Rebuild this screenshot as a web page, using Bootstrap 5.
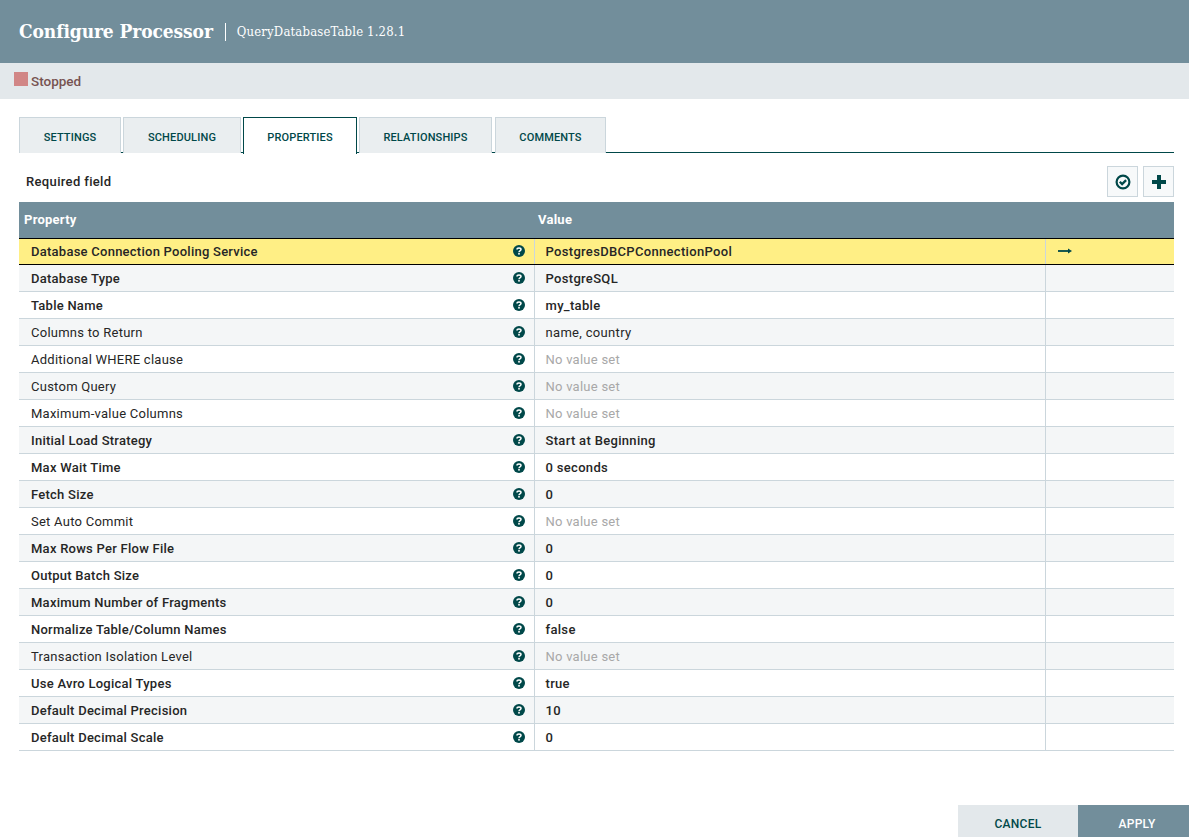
<!DOCTYPE html>
<html lang="en">
<head>
<meta charset="utf-8">
<title>Configure Processor</title>
<link href="https://cdn.jsdelivr.net/npm/bootstrap@5.3.0/dist/css/bootstrap.min.css" rel="stylesheet">
<style>
html,body{height:100%;margin:0;overflow:hidden}
body{font-family:Roboto,sans-serif;font-size:13px;color:#262626;background:#fff}
.shell{height:837px}
.dlg-head{height:63px;background:#728e9b;color:#fff;padding:0 19px;flex:none}
.dlg-title{font-family:"DejaVu Serif Condensed","DejaVu Serif",serif;font-weight:700;font-size:19px;line-height:1;margin:0 12px 0 0;letter-spacing:-.1px}
.dlg-sub{font-family:"DejaVu Serif Condensed","DejaVu Serif",serif;font-size:13px;line-height:18px;border-left:1px solid #fff;padding-left:11px;letter-spacing:.16px}
.stat-bar{height:36px;background:#e3e8eb;padding:0 14px;flex:none}
.stat-sq{width:14px;height:14px;background:#d18686;margin-right:3px;margin-top:-4px}
.stat-txt{color:#775351;font-weight:500;font-size:13.5px}
.tab-bar{margin:18px 15px 0 19px;height:36px;border-bottom:1px solid #004849;padding:0;gap:2px;flex:none}
.tab-item{height:36px;background:#eaeef0;border:1px solid #cbd6dc;border-bottom:0;color:#004849;font-size:11px;font-weight:500;letter-spacing:.15px;text-transform:uppercase;padding-top:5px}
.tab-item.on{background:#fff;border:1px solid #004849;border-bottom:0;height:37px;position:relative;z-index:1;padding-top:4px}
.tw1{width:102px}.tw2{width:118px}.tw3{width:114px}.tw4{width:133px}.tw5{width:111px}
.tw4{margin-right:1px}
.tool-row{height:49px;margin:0 15px 0 19px;padding:8px 0 0 7px;flex:none}
.req-label{font-weight:500;font-size:13px;letter-spacing:.35px}
.sq-btn{width:31px;height:31px;background:#f7f9fa;border:1px solid #cbd6dc;padding:0}
.btn-gap{gap:5px}
.prop-wrap{margin:0 15px 0 19px;flex:none}
.prop-table{width:100%;border-collapse:collapse;table-layout:fixed;margin:0;letter-spacing:.25px}
.col-p{width:515px}.col-v{width:511px}
.prop-table th{height:36px;background:#728e9b;color:#fff;font-weight:700;font-size:13px;padding:0 5px;border:0}
.prop-table th.val-h{padding-left:4px}
.prop-table td{height:27px;padding:2px 12px 0;border-bottom:1px solid #cbd6dc;vertical-align:middle;background:#fff;font-size:13px;color:#262626}
.prop-table tr:nth-child(even) td{background:#f4f6f7}
.prop-table td.c1{padding-right:9px}
.prop-table td.c2,.prop-table td.c3{border-left:1px solid #cbd6dc}
.prop-table td.c2{padding-left:11px}
.prop-table td.c2 .pval{letter-spacing:.32px}
.prop-table tr.sel td{height:26px;background:#ffef85;border-top:1px solid #000;border-bottom:1px solid #000}
.prop-table tr.req .pname,.prop-table tr.req .pval{font-weight:500}
.help-ic{margin-top:-1px}
.sel .help-ic{margin-top:-3px}
.arrow-ic{margin-top:-3px}
.nil{color:#a8a8a8}
.foot{margin-top:auto;flex:none}
.foot-btn{height:32px;width:120px;border:0;border-radius:0;font-size:12px;font-weight:500;letter-spacing:.3px;padding:6px 0 0}
.foot-cancel{background:#e3e8eb;color:#004849}
.foot-apply{background:#728e9b;color:#fff;width:111px;padding-left:7px}
</style>
</head>
<body>
<div class="shell d-flex flex-column">
  <header class="dlg-head d-flex align-items-center">
    <h1 class="dlg-title">Configure Processor</h1>
    <span class="dlg-sub">QueryDatabaseTable 1.28.1</span>
  </header>
  <div class="stat-bar d-flex align-items-center">
    <span class="stat-sq"></span><span class="stat-txt">Stopped</span>
  </div>
  <div class="tab-bar d-flex">
    <div class="tab-item d-flex align-items-center justify-content-center tw1">Settings</div>
    <div class="tab-item d-flex align-items-center justify-content-center tw2">Scheduling</div>
    <div class="tab-item on d-flex align-items-center justify-content-center tw3">Properties</div>
    <div class="tab-item d-flex align-items-center justify-content-center tw4">Relationships</div>
    <div class="tab-item d-flex align-items-center justify-content-center tw5">Comments</div>
  </div>
  <div class="tool-row d-flex align-items-center justify-content-between">
    <span class="req-label">Required field</span>
    <div class="d-flex btn-gap">
      <button class="sq-btn d-flex align-items-center justify-content-center" aria-label="Verify"><svg width="16" height="16" viewBox="0 0 16 16"><circle cx="8" cy="8" r="6.4" fill="none" stroke="#004849" stroke-width="2.2"/><path d="M4.8 7.8l2.3 2.3 4-4" fill="none" stroke="#004849" stroke-width="2.3"/></svg></button>
      <button class="sq-btn d-flex align-items-center justify-content-center" aria-label="Add"><svg width="16" height="16" viewBox="0 0 16 16"><path d="M8 1v14M1 8h14" stroke="#004849" stroke-width="4"/></svg></button>
    </div>
  </div>
  <div class="prop-wrap">
    <table class="prop-table">
      <colgroup><col class="col-p"><col class="col-v"><col></colgroup>
      <thead><tr><th>Property</th><th class="val-h" colspan="2">Value</th></tr></thead>
      <tbody id="rows"></tbody>
    </table>
  </div>
  <div class="foot d-flex justify-content-end">
    <button class="btn foot-btn foot-cancel">CANCEL</button>
    <button class="btn foot-btn foot-apply">APPLY</button>
  </div>
</div>
<script>
var data=[["Database Connection Pooling Service","PostgresDBCPConnectionPool",1],["Database Type","PostgreSQL",1],["Table Name","my_table",1],["Columns to Return","name, country",0],["Additional WHERE clause",null,0],["Custom Query",null,0],["Maximum-value Columns",null,0],["Initial Load Strategy","Start at Beginning",1],["Max Wait Time","0 seconds",1],["Fetch Size","0",1],["Set Auto Commit",null,0],["Max Rows Per Flow File","0",1],["Output Batch Size","0",1],["Maximum Number of Fragments","0",1],["Normalize Table/Column Names","false",1],["Transaction Isolation Level",null,0],["Use Avro Logical Types","true",1],["Default Decimal Precision","10",1],["Default Decimal Scale","0",1]];
var help='<svg class="help-ic flex-shrink-0" width="12" height="12" viewBox="0 0 12 12"><circle cx="6" cy="6" r="6" fill="#004849"/><path d="M4 4.6C4 3.5 4.9 3 6 3s2 .6 2 1.6c0 1.4-2 1.3-2 2.6" fill="none" stroke="#fff" stroke-width="1.5"/><rect x="5.2" y="8" width="1.6" height="1.6" fill="#fff"/></svg>';
var arrow='<svg class="arrow-ic d-block" width="14" height="8" viewBox="0 0 14 8"><path d="M0 4h10" stroke="#004849" stroke-width="1.8"/><path d="M10 1.5l4 2.5-4 2.5z" fill="#004849"/></svg>';
document.getElementById('rows').innerHTML=data.map(function(r,i){
 return '<tr class="'+(r[2]?'req ':'')+(i==0?'sel':'')+'"><td class="c1"><div class="d-flex justify-content-between align-items-center"><span class="pname">'+r[0]+'</span>'+help+'</div></td><td class="c2">'+(r[1]===null?'<span class="nil">No value set</span>':'<span class="pval">'+r[1]+'</span>')+'</td><td class="c3">'+(i==0?arrow:'')+'</td></tr>';
}).join('');
</script>
</body>
</html>
